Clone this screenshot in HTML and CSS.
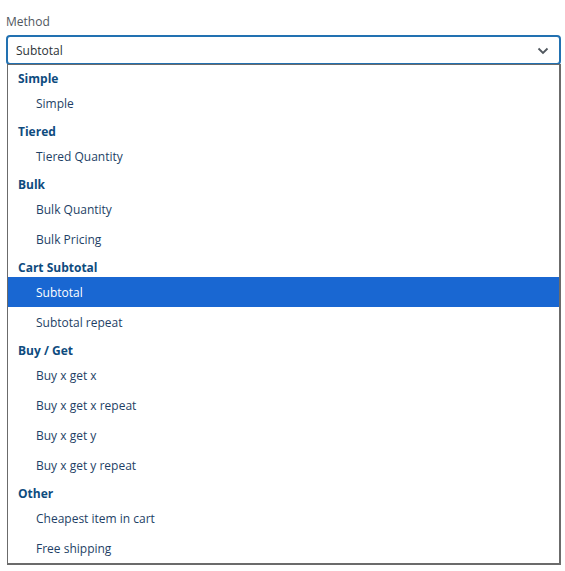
FILE: index.html
```html
<!DOCTYPE html>
<html lang="en">

<head>
    <meta charset="UTF-8">
    <meta name="viewport" content="width=device-width, initial-scale=1.0">
    <title>Method</title>
    <link rel="stylesheet" href="styles.css">
</head>

<body>
    <div class="field">
        <label class="field-label">Method</label>
        <div class="select">
            <span class="select-value">Subtotal</span>
            <svg class="chevron" width="12" height="8" viewBox="0 0 12 8">
                <path d="M1.5 1.5 L6 6 L10.5 1.5" fill="none" stroke="#50575e" stroke-width="1.8" />
            </svg>
        </div>
        <ul class="options">
            <li class="group">Simple</li>
            <li class="option">Simple</li>
            <li class="group">Tiered</li>
            <li class="option">Tiered Quantity</li>
            <li class="group">Bulk</li>
            <li class="option">Bulk Quantity</li>
            <li class="option">Bulk Pricing</li>
            <li class="group">Cart Subtotal</li>
            <li class="option selected">Subtotal</li>
            <li class="option">Subtotal repeat</li>
            <li class="group">Buy / Get</li>
            <li class="option">Buy x get x</li>
            <li class="option">Buy x get x repeat</li>
            <li class="option">Buy x get y</li>
            <li class="option">Buy x get y repeat</li>
            <li class="group">Other</li>
            <li class="option">Cheapest item in cart</li>
            <li class="option">Free shipping</li>
        </ul>
    </div>
</body>

</html>
```

FILE: styles.css
```css
body * {
    box-sizing: border-box;
}

body {
    margin: 0;
    padding: 0;
    background: #fff;
    font-family: "Open Sans", "Noto Sans", sans-serif;
    font-size: 12px;
}

.field {
    padding: 13px 4px 0 6px;
}

.field-label {
    display: block;
    color: #50575e;
    line-height: 18px;
    margin-bottom: 4px;
}

.select {
    display: flex;
    align-items: center;
    justify-content: space-between;
    height: 30px;
    border: 2px solid #2271b1;
    border-radius: 4px;
    padding: 1px 10px 0 8px;
    color: #2c3338;
}

.chevron {
    display: block;
}

.options {
    list-style: none;
    margin: -1px 0 0 1px;
    padding: 0;
    border: 1px solid #6b6b6b;
    border-width: 1px 2px 2px 1px;
    background: #fff;
}

.group {
    height: 23px;
    padding: 5px 0 0 10px;
    font-weight: 700;
    color: #0e4b7e;
    line-height: 18px;
}

.option {
    height: 30px;
    line-height: 30px;
    padding: 1px 0 0 28px;
    color: #1e3f66;
}

.selected {
    background: #1967d2;
    color: #fff;
}
```
